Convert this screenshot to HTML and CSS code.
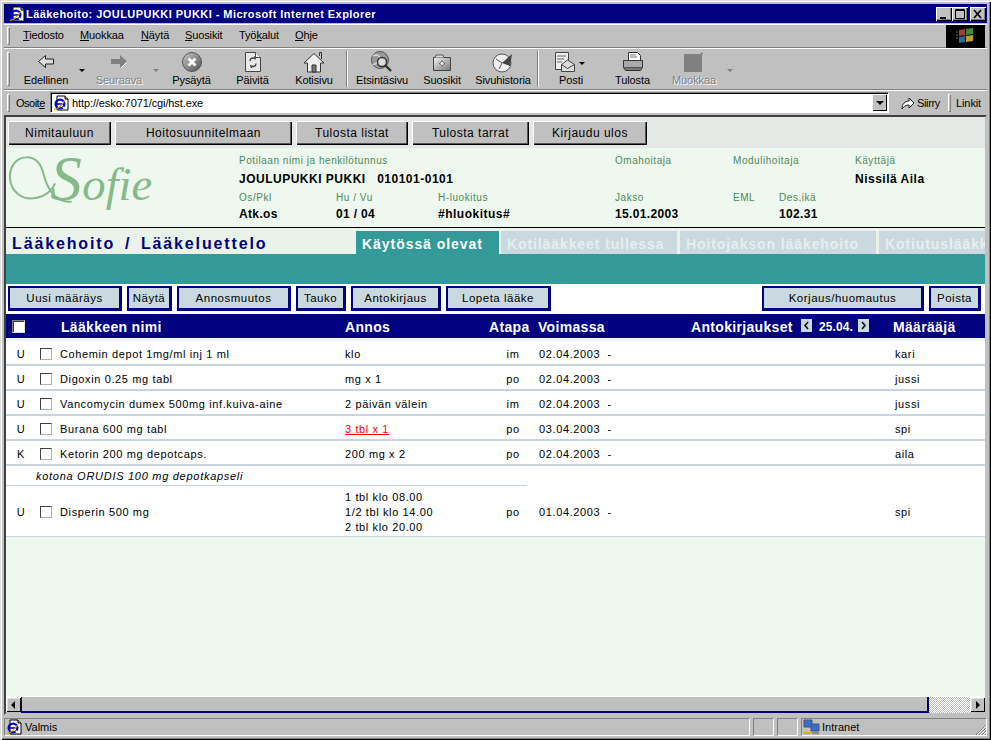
FILE: index.html
```html
<!DOCTYPE html>
<html lang="fi">
<head>
<meta charset="utf-8">
<title>Lääkehoito: JOULUPUKKI PUKKI - Microsoft Internet Explorer</title>
<link rel="stylesheet" href="styles.css">
</head>
<body>
<svg class="defs" width="0" height="0">
  <defs>
    <symbol id="ie" viewBox="0 0 16 16">
      <path d="M4 1h8l3 3v11H4z" fill="#fff" stroke="#000"/>
      <path d="M12 1v3h3" fill="#c0c0c0" stroke="#000"/>
      <circle cx="7" cy="9" r="4.4" fill="none" stroke="#0000c8" stroke-width="2.2"/>
      <path d="M3 9h8" stroke="#0000c8" stroke-width="1.6"/>
      <path d="M11 13l-1-1" stroke="#fff" stroke-width="2"/>
      <path d="M1 14c2 1 8-3 11-9" fill="none" stroke="#d8a800" stroke-width="1.2"/>
    </symbol>
    <linearGradient id="stopg" x1="0" y1="0" x2="1" y2="1">
      <stop offset="0" stop-color="#c8c8c8"/><stop offset=".6" stop-color="#808080"/><stop offset="1" stop-color="#505050"/>
    </linearGradient>
    <linearGradient id="foldg" x1="0" y1="0" x2="1" y2="1">
      <stop offset="0" stop-color="#f4f4f4"/><stop offset="1" stop-color="#777"/>
    </linearGradient>
  </defs>
</svg>
<div class="window">
  <header class="titlebar">
    <svg class="ti" width="16" height="16"><use href="#ie"/></svg>
    <span class="titletext">Lääkehoito: JOULUPUKKI PUKKI - Microsoft Internet Explorer</span>
    <div class="winbtns">
      <span class="wb"><svg width="14" height="12"><rect x="3" y="9" width="6" height="2"/></svg></span>
      <span class="wb"><svg width="14" height="12"><path d="M2.500 1.500h9v9h-9zM2 2.500h10" fill="none" stroke="#000"/></svg></span>
      <span class="wb wbx"><svg width="14" height="12"><path d="M3 2l7 8M10 2l-7 8" stroke="#000" stroke-width="1.600"/></svg></span>
    </div>
  </header>

  <nav class="menubar">
    <i class="grip"></i>
    <span class="mi m1"><u>T</u>iedosto</span>
    <span class="mi m2"><u>M</u>uokkaa</span>
    <span class="mi m3"><u>N</u>äytä</span>
    <span class="mi m4"><u>S</u>uosikit</span>
    <span class="mi m5">Työ<u>k</u>alut</span>
    <span class="mi m6"><u>O</u>hje</span>
    <span class="flag"><svg width="20" height="18" viewBox="0 0 20 18"><path d="M3 3l6-1v6l-6 1z" fill="#a8402c"/><path d="M10 2l7-1v6l-7 1z" fill="#3c8a40"/><path d="M3 10l6-1v6l-6 1z" fill="#3068a0"/><path d="M10 9l7-1v6l-7 1z" fill="#c0a020"/><path d="M0 5h2M0 8h2M0 11h2" stroke="#666"/></svg></span>
  </nav>

  <div class="toolbar">
    <i class="grip"></i>
    <div class="tb b1">
      <svg width="24" height="22" viewBox="0 0 24 22"><path d="M4.500 10.500l7-6v3.500h8v5h-8v3.500z" fill="#dcdcdc" stroke="#222"/></svg>
      <span>Edellinen</span>
    </div>
    <i class="caret c1"></i>
    <div class="tb b2 dis">
      <svg width="24" height="22" viewBox="0 0 24 22"><path d="M20 10.500l-7-6.500v4H4v5h9v4z" fill="#808080"/><path d="M14 17l6-6" stroke="#fff"/></svg>
      <span>Seuraava</span>
    </div>
    <i class="caret c2 dim"></i>
    <div class="tb b3">
      <svg width="24" height="22" viewBox="0 0 24 22"><circle cx="12" cy="11" r="9.500" fill="url(#stopg)" stroke="#555"/><path d="M8.500 7.500l7 7M15.500 7.500l-7 7" stroke="#fff" stroke-width="2.800"/></svg>
      <span>Pysäytä</span>
    </div>
    <div class="tb b4">
      <svg width="24" height="22" viewBox="0 0 24 22"><path d="M4.500 1.500h10l5 5v14h-15z" fill="#e8e8e8" stroke="#444"/><path d="M14.500 1.500v5h5" fill="#fff" stroke="#444"/><path d="M9 10c0-3 3-3.500 5-2.500l-.5-2M15 12.500c0 3-3 3.500-5 2.500l.5 2" fill="none" stroke="#444" stroke-width="1.400"/></svg>
      <span>Päivitä</span>
    </div>
    <div class="tb b5">
      <svg width="24" height="22" viewBox="0 0 24 22"><path d="M12 2.500L2 12h3.500v9h13v-9H22z" fill="#eee" stroke="#333"/><path d="M17.500 5V1.500h2V8" fill="none" stroke="#333"/><path d="M10 21v-7h4v7z" fill="#777" stroke="#333"/></svg>
      <span>Kotisivu</span>
    </div>
    <i class="sep s1"></i>
    <div class="tb b6">
      <svg width="24" height="22" viewBox="0 0 24 22"><circle cx="10" cy="9" r="8.500" fill="#999" stroke="#555"/><path d="M3 5c3-2 6-1 7 2M3 13c2 1 3 0 4-2" fill="none" stroke="#ddd" stroke-width="1.500"/><circle cx="12" cy="11" r="4.500" fill="#ddd" stroke="#333" stroke-width="1.500"/><path d="M15 14l6 6" stroke="#333" stroke-width="2.400"/></svg>
      <span>Etsintäsivu</span>
    </div>
    <div class="tb b7">
      <svg width="24" height="22" viewBox="0 0 24 22"><path d="M3.500 6.500h17v13h-17z" fill="url(#foldg)" stroke="#444"/><path d="M5 6.500l1-2.500h7l1 2.500" fill="#ddd" stroke="#555"/><path d="M12 9.500l1 2 2 1-2 1-1 2-1-2-2-1 2-1z" fill="#fff" stroke="#333" stroke-width=".6"/></svg>
      <span>Suosikit</span>
    </div>
    <div class="tb b8">
      <svg width="24" height="22" viewBox="0 0 24 22"><circle cx="11" cy="12" r="9" fill="#eee" stroke="#555"/><path d="M11 12l10-9-2 12z" fill="#444"/><path d="M11 12L5 8M11 12l-3 6" stroke="#555"/></svg>
      <span>Sivuhistoria</span>
    </div>
    <i class="sep s2"></i>
    <div class="tb b9">
      <svg width="24" height="22" viewBox="0 0 24 22"><path d="M1.500 1.500h13v17h-13z" fill="#eee" stroke="#444"/><path d="M3 5h9M3 8h7M3 11h5" stroke="#666"/><path d="M7.500 20.500v-7l6-4.500 7 4.500v7z" fill="#ddd" stroke="#444"/><path d="M7.500 13.500l6 4 7-4" fill="none" stroke="#444"/></svg>
      <span>Posti</span>
    </div>
    <i class="caret c3"></i>
    <div class="tb b10">
      <svg width="24" height="22" viewBox="0 0 24 22"><path d="M7.500 9.500v-8h9l3 3v5z" fill="#fff" stroke="#333"/><path d="M9 4h6M9 6h7" stroke="#777"/><path d="M2.500 9.500h19v7h-19z" fill="#aaa" stroke="#333"/><path d="M2.500 16.500l2 3h15l2-3" fill="#777" stroke="#333"/></svg>
      <span>Tulosta</span>
    </div>
    <div class="tb b11 dis">
      <svg width="24" height="22" viewBox="0 0 24 22"><path d="M2 3h16l2-2 1 1-1 2v17H2z" fill="#808080"/></svg>
      <span>Muokkaa</span>
    </div>
    <i class="caret c4 dim"></i>
  </div>

  <div class="addressbar">
    <i class="grip"></i>
    <span class="addrlabel">Osoit<u>e</u></span>
    <div class="addrfield">
      <svg class="ai" width="16" height="16"><use href="#ie"/></svg>
      <span class="url">http://esko:7071/cgi/hst.exe</span>
      <span class="dd"><i></i></span>
    </div>
    <span class="go"><svg width="16" height="14" viewBox="0 0 16 14"><path d="M2 13c0-5 3-8 7-8V2l5 5-5 5V9c-3 0-5 1-7 4z" fill="#fff" stroke="#222"/></svg>Siirry</span>
    <i class="grip g2"></i>
    <span class="links">Linkit</span>
  </div>

  <main class="content">
    <div class="navrow">
      <button class="nb n1">Nimitauluun</button>
      <button class="nb n2">Hoitosuunnitelmaan</button>
      <button class="nb n3">Tulosta listat</button>
      <button class="nb n4">Tulosta tarrat</button>
      <button class="nb n5">Kirjaudu ulos</button>
    </div>

    <section class="patient">
      <div class="logo">
        <svg width="160" height="76" viewBox="0 0 480 228">
          <path class="swirl" d="M200 155C160 160 130 130 115 70C105 30 80 20 65 22C35 22 12 50 15 85C18 125 50 148 85 145C115 142 140 125 150 100"/>
          <text class="logotext" x="136" y="150">S<tspan class="ofie" x="232" y="150">ofie</tspan></text>
        </svg>
      </div>
      <div class="pgrid">
        <span class="lb span3">Potilaan nimi ja henkilötunnus</span>
        <span class="lb">Omahoitaja</span>
        <span class="lb span2">Modulihoitaja</span>
        <span class="lb">Käyttäjä</span>

        <strong class="val wide span3">JOULUPUKKI PUKKI&nbsp;&nbsp; 010101-0101</strong>
        <span></span>
        <span class="span2"></span>
        <strong class="val wide">Nissilä Aila</strong>

        <span class="lb">Os/Pkl</span>
        <span class="lb">Hu / Vu</span>
        <span class="lb">H-luokitus</span>
        <span class="lb">Jakso</span>
        <span class="lb">EML</span>
        <span class="lb">Des.ikä</span>
        <span></span>

        <strong class="val">Atk.os</strong>
        <strong class="val">01 / 04</strong>
        <strong class="val wide">#hluokitus#</strong>
        <strong class="val">15.01.2003</strong>
        <span></span>
        <strong class="val">102.31</strong>
        <span></span>
      </div>
    </section>

    <div class="titlerow">
      <h1>Lääkehoito / Lääkeluettelo</h1>
      <div class="tabs">
        <span class="tab active">Käytössä olevat</span>
        <span class="tab t2">Kotilääkkeet tullessa</span>
        <span class="tab t3">Hoitojakson lääkehoito</span>
        <span class="tab t4">Kotiutuslääkkeet</span>
      </div>
    </div>
    <div class="tealbar"></div>

    <div class="actions">
      <button class="ab a1">Uusi määräys</button>
      <button class="ab a2">Näytä</button>
      <button class="ab a3">Annosmuutos</button>
      <button class="ab a4">Tauko</button>
      <button class="ab a5">Antokirjaus</button>
      <button class="ab a6">Lopeta lääke</button>
      <span class="spacer"></span>
      <button class="ab a7">Korjaus/huomautus</button>
      <button class="ab a8">Poista</button>
    </div>

    <div class="thead">
      <span class="hcheck"></span>
      <span class="hname">Lääkkeen nimi</span>
      <span class="hannos">Annos</span>
      <span class="hatapa">Atapa</span>
      <span class="hvoim">Voimassa</span>
      <span class="hanto">Antokirjaukset</span>
      <span class="arrow"><svg width="11" height="13"><path d="M7 3L4 6.500l3 3.500" fill="none" stroke="#000" stroke-width="1.600"/></svg></span>
      <span class="hdate">25.04.</span>
      <span class="arrow"><svg width="11" height="13"><path d="M4 3l3 3.500L4 10" fill="none" stroke="#000" stroke-width="1.600"/></svg></span>
      <span class="hmaar">Määrääjä</span>
    </div>

    <div class="rows">
      <div class="row"><span class="mark">U</span><span class="chk"></span><span>Cohemin depot 1mg/ml inj 1 ml</span><span>klo</span><span class="ctr">im</span><span class="vo">02.04.2003&nbsp; -</span><span>kari</span></div>
      <div class="row"><span class="mark">U</span><span class="chk"></span><span>Digoxin 0.25 mg tabl</span><span>mg x 1</span><span class="ctr">po</span><span class="vo">02.04.2003&nbsp; -</span><span>jussi</span></div>
      <div class="row"><span class="mark">U</span><span class="chk"></span><span>Vancomycin dumex 500mg inf.kuiva-aine</span><span>2 päivän välein</span><span class="ctr">im</span><span class="vo">02.04.2003&nbsp; -</span><span>jussi</span></div>
      <div class="row"><span class="mark">U</span><span class="chk"></span><span>Burana 600 mg tabl</span><a class="red">3 tbl x 1</a><span class="ctr">po</span><span class="vo">03.04.2003&nbsp; -</span><span>spi</span></div>
      <div class="row"><span class="mark">K</span><span class="chk"></span><span>Ketorin 200 mg depotcaps.</span><span>200 mg x 2</span><span class="ctr">po</span><span class="vo">02.04.2003&nbsp; -</span><span>aila</span></div>
      <div class="note"><span>kotona ORUDIS 100 mg depotkapseli</span></div>
      <div class="row tall"><span class="mark">U</span><span class="chk"></span><span>Disperin 500 mg</span><span>1 tbl klo 08.00<br>1/2 tbl klo 14.00<br>2 tbl klo 20.00</span><span class="ctr">po</span><span class="vo">01.04.2003&nbsp; -</span><span>spi</span></div>
    </div>
    <div class="filler"></div>

    <div class="hscroll">
      <span class="sb"><svg width="6" height="8"><path d="M4 0v8L0 4z"/></svg></span>
      <span class="thumb"></span>
      <span class="track"></span>
      <span class="sb"><svg width="6" height="8"><path d="M1 0v8l4-4z"/></svg></span>
    </div>
  </main>

  <footer class="statusbar">
    <div class="st main"><svg width="16" height="16"><use href="#ie"/></svg><span>Valmis</span></div>
    <div class="st s22"></div>
    <div class="st s22"></div>
    <div class="st zone">
      <svg width="17" height="16" viewBox="0 0 17 16"><path d="M1 1h8v7H1z" fill="#2f6fd8" stroke="#555"/><path d="M8 5h8v7H8z" fill="#2f6fd8" stroke="#555"/><path d="M9 13h7v2H9z" fill="#888"/><path d="M1 14h7" stroke="#d0b000" stroke-width="2"/></svg>
      <span>Intranet</span>
    </div>
    <svg class="rgrip" width="12" height="12" viewBox="0 0 12 12"><path d="M11 1L1 11M11 4L4 11M11 7L7 11" stroke="#808080"/><path d="M11 2L2 11M11 5L5 11M11 8L8 11" stroke="#fff"/></svg>
  </footer>
</div>
</body>
</html>
```
FILE: styles.css
```css
* { box-sizing: border-box; }
html, body { margin: 0; padding: 0; height: 740px; overflow: hidden; background: #c0c0c0; }
body { font-family: "Liberation Sans", Arial, sans-serif; font-size: 11px; color: #000; }
.defs { position: absolute; }
i { font-style: normal; display: block; flex: none; }

.window {
  width: 991px; height: 740px; padding: 4px; background: #c0c0c0;
  display: flex; flex-direction: column;
  box-shadow: inset 1px 1px 0 #dfdfdf, inset 2px 2px 0 #fff, inset -1px -1px 0 #000, inset -2px -2px 0 #808080;
}

.titlebar { height: 19px; background: #000080; color: #fff; display: flex; align-items: center; padding: 0 1px 0 5px; flex: none; }
.ti { flex: none; }
.titletext { font-weight: 700; margin-left: 1px; font-size: 11px; letter-spacing: .45px; white-space: nowrap; }
.winbtns { margin-left: auto; display: flex; }
.wb { width: 16px; height: 14px; background: #c0c0c0; display: block; box-shadow: inset 1px 1px 0 #fff, inset -1px -1px 0 #000, inset -2px -2px 0 #808080; padding: 1px; line-height: 0; }
.wbx { margin-left: 2px; }

.menubar { height: 24px; margin-top: 1px; display: flex; align-items: center; border-top: 1px solid #fff; border-bottom: 1px solid #808080; flex: none; padding: 0 0 0 3px; }
.grip { width: 3px; height: 18px; border: 1px solid; border-color: #fff #808080 #808080 #fff; }
.mi { letter-spacing: -.12px; font-size: 11px; white-space: nowrap; flex: none; margin-top: -2px; }
.m1 { margin-left: 13px; width: 57px; }
.m2 { width: 61px; }
.m3 { width: 44px; }
.m4 { width: 54px; }
.m5 { width: 56px; }
.m6 { width: 30px; }
.flag { margin-left: auto; width: 39px; height: 23px; background: #000; display: flex; align-items: center; justify-content: center; margin-right: 2px; }

.toolbar { height: 42px; display: flex; align-items: center; border-top: 1px solid #fff; border-bottom: 1px solid #808080; flex: none; padding-left: 3px; }
.toolbar .grip { height: 34px; }
.tb { display: flex; flex-direction: column; align-items: center; flex: none; height: 38px; justify-content: flex-start; white-space: nowrap; font-size: 11px; letter-spacing: -.1px; padding-top: 1px; }
.tb svg { display: block; height: 22px; }
.tb span { margin-top: 1px; }
.dis span { color: #808080; text-shadow: 1px 1px 0 #fff; }
.caret { width: 0; height: 0; border: 3px solid transparent; border-top: 3px solid #000; border-bottom: 0; }
.caret.dim { border-top-color: #808080; }
.b1 { width: 60px; margin-left: 6px; }
.c1 { margin-left: 3px; margin-right: 4px; margin-top: 2px; }
.b2 { width: 56px; margin-left: 2px; }
.c2 { margin-left: 6px; margin-top: 2px; }
.b3 { width: 61px; margin-left: 2px; }
.b4 { width: 61px; }
.b5 { width: 62px; }
.s1, .s2 { width: 2px; height: 36px; background: #808080; border-right: 1px solid #fff; }
.s1 { margin-left: 1px; }
.b6 { width: 66px; margin-left: 1px; }
.b7 { width: 54px; }
.b8 { width: 68px; }
.b9 { width: 58px; margin-left: 3px; margin-right: -21px; }
.b9 svg { margin-right: 10px; }
.c3 { margin-bottom: 12px; }
.b10 { width: 61px; margin-left: 17px; }
.b11 { width: 62px; }
.c4 { margin-left: 2px; margin-top: 2px; }

.addressbar { height: 24px; display: flex; align-items: center; border-top: 1px solid #fff; flex: none; padding-left: 3px; }
.addressbar .grip { height: 18px; }
.addrlabel { margin-left: 5px; width: 35px; letter-spacing: -.5px; flex: none; padding-left: 1px; }
.addrfield { width: 839px; height: 21px; background: #fff; display: flex; align-items: center; border: 1px solid; border-color: #808080 #fff #fff #808080; box-shadow: inset 1px 1px 0 #000; padding: 0 1px 0 2px; flex: none; }
.ai { flex: none; }
.url { margin-left: 3px; letter-spacing: -.1px; }
.dd { margin-left: auto; width: 15px; height: 17px; background: #c0c0c0; box-shadow: inset 1px 1px 0 #fff, inset -1px -1px 0 #000; display: flex; align-items: center; justify-content: center; }
.dd i { width: 0; height: 0; border: 4px solid transparent; border-top: 4px solid #000; border-bottom: 0; }
.go { width: 53px; display: flex; align-items: center; padding-left: 11px; gap: 1px; flex: none; letter-spacing: -.35px; }
.g2 { margin-left: 6px; }
.links { margin-left: 5px; letter-spacing: -.1px; }

.content { height: 600px; width: 983px; margin-top: 1px; flex: none; background: #eef8ee; display: flex; flex-direction: column; border: 2px solid; border-color: #404040 #c0c0c0 #c0c0c0 #404040; overflow: hidden; }

.navrow { height: 31px; background: #e4e9e6; display: flex; align-items: flex-start; padding: 4px 0 0 2px; flex: none; }
.nb { height: 24px; margin: 0; padding: 0; background: #c0c0c0; border: 0; box-shadow: inset 1px 1px 0 #fff, inset -1px -1px 0 #000, inset -2px -2px 0 #555; font: 12px "Liberation Sans", Arial, sans-serif; color: #000; letter-spacing: .5px; flex: none; }
.n1 { width: 103px; margin-right: 4px; }
.n2 { width: 177px; margin-right: 4px; }
.n3 { width: 112px; margin-right: 4px; }
.n4 { width: 117px; margin-right: 4px; }
.n5 { width: 114px; }

.patient { height: 80px; display: flex; flex: none; background: #eef8ee; border-bottom: 1px solid #000; }
.logo { width: 233px; padding: 2px 0 0 0; margin-left: -1px; flex: none; }
.logo svg { display: block; overflow: visible; }
.swirl { fill: none; stroke: #86b98a; stroke-width: 6; }
.logotext { font-family: "Liberation Serif", serif; font-style: italic; font-size: 190px; fill: #86b98a; }
.ofie { font-size: 140px; }
.pgrid { display: grid; grid-template-columns: 97px 102px 177px 118px 46px 76px 1fr; grid-template-rows: 18px 18px 20px 12px; padding-top: 4px; margin-left: 1px; }
.lb { color: #4f8a5a; font-size: 10px; letter-spacing: .55px; line-height: 16px; white-space: nowrap; align-self: center; }
.val { font-weight: 700; font-size: 12px; letter-spacing: .35px; line-height: 14px; white-space: nowrap; align-self: center; }
.val.wide { letter-spacing: .5px; }
.span3 { grid-column: span 3; }
.span2 { grid-column: span 2; }

.titlerow { height: 26px; display: flex; align-items: flex-end; flex: none; background: #e9f3e9; overflow: hidden; }
h1 { margin: 3px 0 0; padding: 0 0 0 6px; font-size: 16px; line-height: 25px; color: #000080; letter-spacing: 1.87px; word-spacing: 3.4px; width: 350px; flex: none; white-space: nowrap; align-self: flex-start; }
.tabs { display: flex; align-items: flex-end; flex: none; width: 629px; overflow: hidden; }
.tab { height: 23px; line-height: 26px; font-weight: 700; font-size: 14px; letter-spacing: .9px; color: #e8eef0; background: #c9d9df; padding-left: 6px; margin-right: 3px; white-space: nowrap; flex: none; overflow: hidden; }
.tab.active { background: #339999; color: #fff; width: 143px; margin-right: 2px; letter-spacing: .95px; }
.t2 { width: 176px; }
.t3 { width: 196px; }
.t4 { width: 106px; margin-right: 0; }

.tealbar { height: 30px; background: #339999; flex: none; }

.actions { height: 30px; background: #fff; display: flex; align-items: flex-start; padding: 2px 4px 0 2px; gap: 5px; flex: none; }
.ab { height: 25px; margin: 0; padding: 0; background: #c9d9df; border: 2px solid #000080; border-right-width: 3px; border-bottom-width: 3px; font: 11.5px "Liberation Sans", Arial, sans-serif; letter-spacing: .5px; color: #000; flex: none; }
.a1 { width: 114px; } .a2 { width: 45px; } .a3 { width: 114px; } .a4 { width: 50px; } .a5 { width: 90px; } .a6 { width: 105px; }
.a7 { width: 162px; } .a8 { width: 52px; }
.spacer { flex: 1; }

.thead { height: 24px; background: #000080; color: #fff; font-weight: 700; font-size: 14px; letter-spacing: .32px; display: flex; align-items: center; flex: none; white-space: nowrap; padding-top: 1px; }
.hcheck { width: 13px; height: 13px; background: #fff; border: 1px solid; border-color: #808080 #dfdfdf #dfdfdf #808080; box-shadow: inset 1px 1px 0 #404040; margin: -1px 0 0 6px; flex: none; }
.hname { margin-left: 36px; width: 284px; flex: none; }
.hannos { width: 144px; flex: none; }
.hatapa { width: 49px; flex: none; }
.hvoim { width: 153px; flex: none; }
.hanto { width: 110px; flex: none; }
.arrow { width: 11px; height: 13px; margin-top: -2px; background: #c9d9df; line-height: 0; flex: none; }
.hdate { width: 46px; padding-left: 7px; flex: none; font-size: 12px; letter-spacing: .1px; }
.hmaar { margin-left: 24px; flex: none; }

.rows { margin-top: 3px; background: #fff; flex: none; }
.row { display: grid; grid-template-columns: 30px 24px 285px 150px 36px 364px 1fr; height: 25px; padding-top: 2px; align-items: center; border-bottom: 2px solid #c8d5e0; font-size: 11px; letter-spacing: .62px; white-space: nowrap; }
.mark { text-align: center; }
.chk { width: 12px; height: 12px; background: #fff; border: 1px solid; border-color: #404040 #b0b0b0 #b0b0b0 #404040; margin: 0 0 0 4px; }
.ctr { text-align: center; }
.vo { padding-left: 8px; }
.red { color: #f00; text-decoration: underline; }
.note { height: 20px; width: 521px; border-bottom: 1px solid #c8d5e0; padding-left: 30px; font-style: italic; font-size: 11px; letter-spacing: .72px; line-height: 21px; }
.row.tall { height: 51px; line-height: 15px; border-bottom-width: 1px; }

.filler { flex: 1; background: #eef8ee; }

.hscroll { height: 17px; display: flex; flex: none; background: #c0c0c0; border-top: 1px solid #fff; }
.sb { width: 15px; height: 15px; background: #c0c0c0; box-shadow: inset 1px 1px 0 #fff, inset -1px -1px 0 #000, inset 2px 2px 0 #dfdfdf; display: flex; align-items: center; justify-content: center; flex: none; }
.thumb { width: 908px; height: 16px; background: #c0c0c0; border-left: 1px solid #000080; border-right: 2px solid #000080; border-bottom: 2px solid #000080; flex: none; }
.track { flex: 1; height: 16px; background: repeating-conic-gradient(#c0c0c0 0 25%, #fff 0 50%) 0 0 / 2px 2px; }

.statusbar { height: 18px; margin-top: 3px; display: flex; align-items: stretch; flex: none; position: relative; gap: 3px; }
.st { border: 1px solid; border-color: #808080 #fff #fff #808080; display: flex; align-items: center; flex: none; }
.st.main { width: 746px; padding-left: 1px; gap: 3px; }
.s22 { width: 21px; }
.st.zone { flex: 1; padding-left: 1px; gap: 2px; }
.rgrip { position: absolute; right: 0; bottom: 0; }
```
